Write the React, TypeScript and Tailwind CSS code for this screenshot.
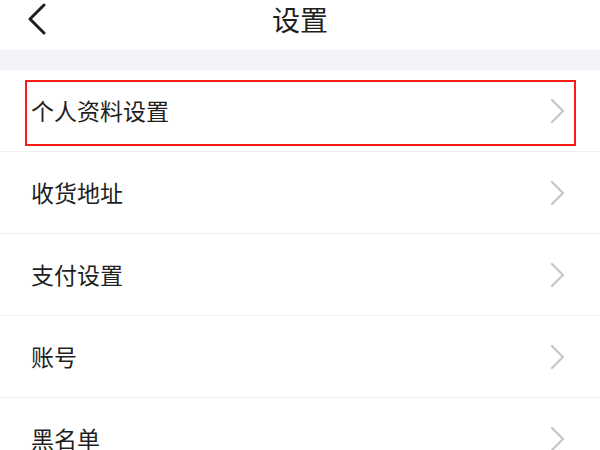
import React from "react";

const items = ["个人资料设置", "收货地址", "支付设置", "账号", "黑名单"];

function Chevron() {
  return (
    <svg width="16" height="26" viewBox="0 0 16 26" fill="none">
      <path d="M2 2 L13 13 L2 24" stroke="#c6c6c6" strokeWidth="2.2" strokeLinecap="round" strokeLinejoin="round" />
    </svg>
  );
}

export default function App() {
  return (
    <div
      className="relative w-[600px] h-[450px] overflow-hidden bg-white text-[#1f1f1f]"
      style={{ fontFamily: '"Noto Sans CJK SC", "Noto Sans", sans-serif' }}
    >
      <div className="relative h-[50px] flex items-center justify-center">
        <div className="absolute left-[27px] top-[3px]">
          <svg width="20" height="32" viewBox="0 0 20 32" fill="none">
            <path d="M17 2 L3 16 L17 30" stroke="#1f1f1f" strokeWidth="3" strokeLinecap="round" strokeLinejoin="round" />
          </svg>
        </div>
        <span className="text-[28px] leading-none -mt-[12px]">设置</span>
      </div>
      <div className="h-[20px] bg-[#f3f4f8]" />
      {items.map((t) => (
        <div key={t} className="h-[82px] border-b border-[#efeff2] flex items-center justify-between pl-[31px] pr-[34px]">
          <span className="text-[23px] leading-none">{t}</span>
          <Chevron />
        </div>
      ))}
      <div className="absolute left-[25px] top-[80px] w-[551px] h-[66px] border-2 border-[#ff1a1a]" />
    </div>
  );
}
